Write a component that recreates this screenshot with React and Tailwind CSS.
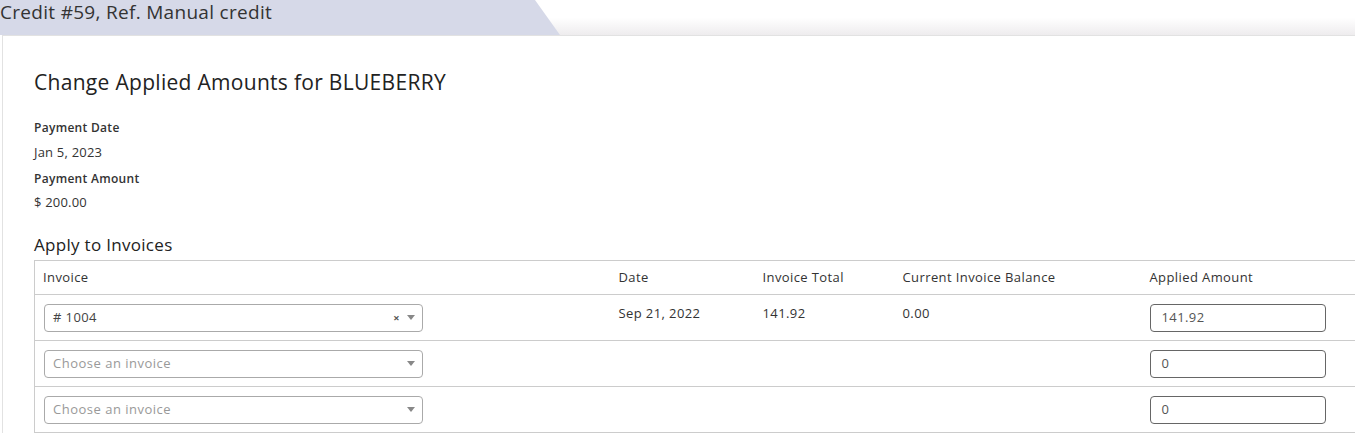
import React from "react";

const font = { fontFamily: "'Open Sans', Lato, sans-serif" };

function Caret() {
  return (
    <svg width="8" height="5" viewBox="0 0 8 5" className="fill-[#888]">
      <path d="M0 0h8L4 5z" />
    </svg>
  );
}

function InvoiceSelect({ value }) {
  return (
    <div className="flex items-center w-[379px] h-[28px] border border-[#aaa] rounded-[4px] bg-white pl-[8px] pr-[7px]">
      <span className={value ? "flex-1 text-[13px] tracking-[0.4px] text-[#444]" : "flex-1 text-[13px] tracking-[0.5px] text-[#999]"}>
        {value || "Choose an invoice"}
      </span>
      {value && <span className="text-[11px] font-bold text-[#555] mr-[7px] leading-none">×</span>}
      <Caret />
    </div>
  );
}

function AmountInput({ value }) {
  return (
    <div className="flex items-center w-[176px] h-[28px] border border-[#666] rounded-[4px] bg-white px-[11px] text-[13px] text-[#555]">
      {value}
    </div>
  );
}

const rows = [
  { invoice: "# 1004", date: "Sep 21, 2022", total: "141.92", balance: "0.00", applied: "141.92" },
  { invoice: "", applied: "0" },
  { invoice: "", applied: "0" },
];

export default function App() {
  return (
    <div className="w-[1355px] h-[433px] overflow-hidden bg-white text-[#333]" style={font}>
      <div className="relative h-[35px] bg-gradient-to-b from-white via-white to-[#eeecee]">
        <div className="absolute inset-0 w-[560px] bg-[#d6d9e8] [clip-path:polygon(0_0,535px_0,560px_100%,0_100%)]" />
        <div className="relative text-[19px] leading-[24px] text-[#333] tracking-[0.3px]">Credit #59, Ref. Manual credit</div>
      </div>
      <div className="ml-[2px] w-[1400px] border-l border-t border-[#e2e2e2] bg-white pl-[31px] pt-[32px]">
        <h2 className="text-[21px] leading-[28px] tracking-[0.3px] text-[#222]">Change Applied Amounts for BLUEBERRY</h2>
        <div className="mt-[24px] text-[12px] font-semibold tracking-[0.3px] text-[#333] leading-[16px]">Payment Date</div>
        <div className="mt-[8px] text-[13px] tracking-[0.2px] leading-[16px]">Jan 5, 2023</div>
        <div className="mt-[11px] text-[12px] font-semibold tracking-[0.3px] leading-[16px]">Payment Amount</div>
        <div className="mt-[7px] text-[13px] tracking-[0.2px] leading-[16px]">$ 200.00</div>
        <div className="mt-[25px] text-[17px] leading-[20px] tracking-[0.3px] text-[#222]">Apply to Invoices</div>
        <table className="mt-[5px] w-[1400px] border-collapse text-[13px] tracking-[0.4px] text-[#333]">
          <thead>
            <tr className="h-[34px] border border-[#ccc]">
              <th className="w-[576px] text-left font-normal px-[8px]">Invoice</th>
              <th className="w-[144px] text-left font-normal px-[8px]">Date</th>
              <th className="w-[140px] text-left font-normal px-[8px]">Invoice Total</th>
              <th className="w-[247px] text-left font-normal px-[8px]">Current Invoice Balance</th>
              <th className="text-left font-normal px-[8px]">Applied Amount</th>
            </tr>
          </thead>
          <tbody>
            {rows.map((r, i) => (
              <tr key={i} className="border border-[#ccc] h-[46px]">
                <td className="px-[9px] align-middle"><InvoiceSelect value={r.invoice} /></td>
                <td className="px-[8px] align-top pt-[9px]">{r.date}</td>
                <td className="px-[8px] align-top pt-[9px]">{r.total}</td>
                <td className="px-[8px] align-top pt-[9px]">{r.balance}</td>
                <td className="px-[8px] align-middle"><AmountInput value={r.applied} /></td>
              </tr>
            ))}
          </tbody>
        </table>
      </div>
    </div>
  );
}
